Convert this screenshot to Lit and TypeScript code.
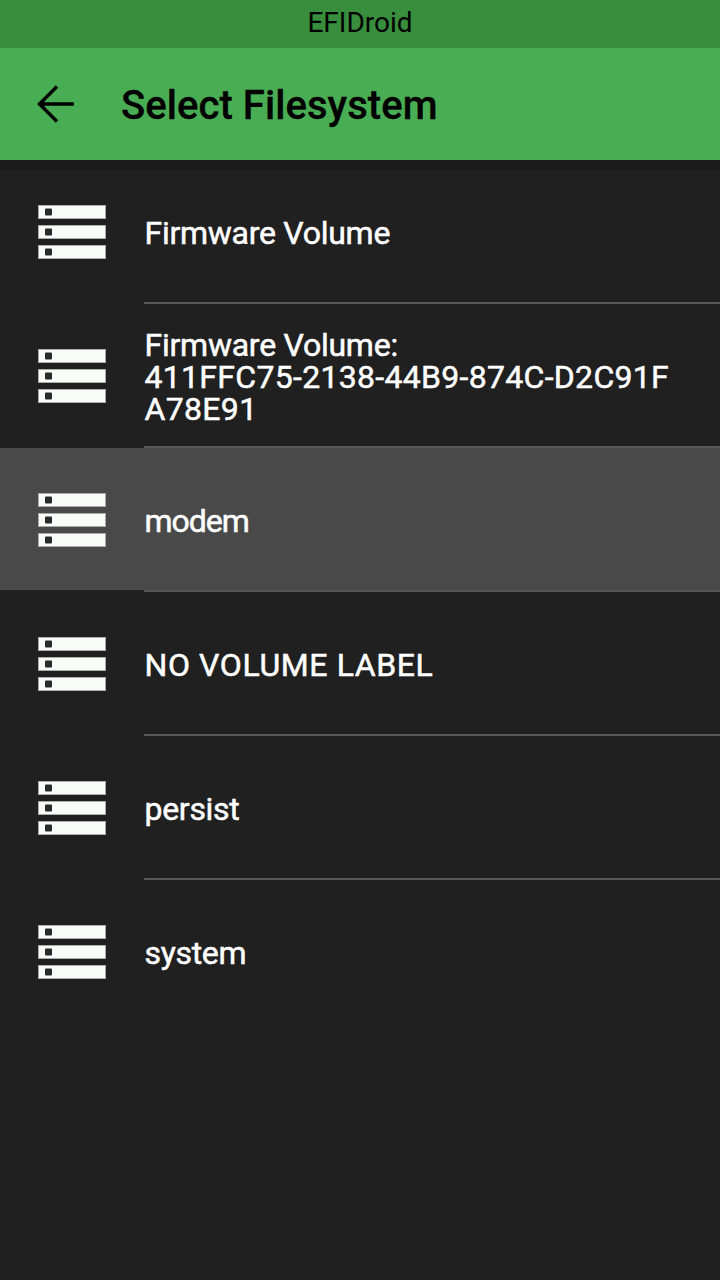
import { LitElement, html, css, svg } from "lit";
import { customElement } from "lit/decorators.js";

// Each visible line with the tracking that reproduces its measured width.
const ITEMS: { lines: [string, number][]; active?: boolean; last?: boolean }[] = [
  { lines: [["Firmware Volume", -0.27]] },
  {
    lines: [
      ["Firmware Volume:", -0.25],
      ["411FFC75-2138-44B9-874C-D2C91F", 0.3],
      ["A78E91", 0.33],
    ],
  },
  { lines: [["modem", -1]], active: true },
  { lines: [["NO VOLUME LABEL", 0.6]] },
  { lines: [["persist", -0.3]] },
  { lines: [["system", -0.33]], last: true },
];

const bar = (y: number) => svg`
  <rect x="0.5" y="${y + 0.5}" width="67" height="13" fill="#f7fcf9" stroke="#a8aba9" stroke-width="1"/>
  <rect x="7" y="${y + 3.5}" width="7" height="7" rx="1" fill="#2a2a2a"/>`;

@customElement("app-root")
export class AppRoot extends LitElement {
  static styles = css`
    :host {
      display: block;
      width: 720px;
      height: 1280px;
      background: #202020;
      font-family: Roboto, "Liberation Sans", sans-serif;
      overflow: hidden;
    }
    .status {
      height: 48px;
      background: #388e3c;
      color: #000;
      font-size: 28px;
      line-height: 46px;
      text-align: center;
    }
    .toolbar {
      height: 112px;
      background: #49ad53;
      display: flex;
      align-items: center;
      color: #000;
    }
    .back {
      width: 121px;
      display: flex;
      padding-left: 36px;
      box-sizing: border-box;
      flex: none;
    }
    .title {
      font-size: 40px;
      font-weight: 500;
      letter-spacing: 0.06px;
      padding-top: 2px;
      -webkit-text-stroke: 0.3px #000;
    }
    .list {
      display: flex;
      flex-direction: column;
    }
    .shadow {
      height: 10px;
      margin-bottom: -10px;
      background: #191a19;
      position: relative;
    }
    .row {
      height: 142px;
      box-sizing: border-box;
      padding-top: 2px;
      display: flex;
      align-items: center;
    }
    .row.active {
      background: #494949;
    }
    .icon {
      width: 144.5px;
      flex: none;
      display: flex;
      padding-left: 38px;
      box-sizing: border-box;
    }
    .label {
      color: #fff;
      font-size: 32px;
      line-height: 32px;
      padding-top: 2px;
      -webkit-text-stroke: 0.5px #fff;
    }
    .line {
      display: block;
      white-space: nowrap;
    }
    .divider {
      height: 2px;
      margin-left: 144px;
      background: #565656;
    }
  `;

  render() {
    return html`
      <div class="status">EFIDroid</div>
      <div class="toolbar">
        <div class="back">
          <svg width="40" height="40" viewBox="0 0 40 40" fill="none" stroke="#000" stroke-width="3.4">
            <path d="M38 20H3M21 2.5L3.5 20L21 37.5"/>
          </svg>
        </div>
        <div class="title">Select Filesystem</div>
      </div>
      <div class="shadow"></div>
      <div class="list">
        ${ITEMS.map(
          (i) => html`
            <div class="row ${i.active ? "active" : ""}">
              <div class="icon">
                <svg width="68" height="54" viewBox="0 0 68 54">${bar(0)}${bar(20)}${bar(40)}</svg>
              </div>
              <div class="label">
                ${i.lines.map(
                  ([t, s]) => html`<span class="line" style="letter-spacing:${s}px">${t}</span>`
                )}
              </div>
            </div>
            ${i.last ? "" : html`<div class="divider"></div>`}
          `
        )}
      </div>
    `;
  }
}
